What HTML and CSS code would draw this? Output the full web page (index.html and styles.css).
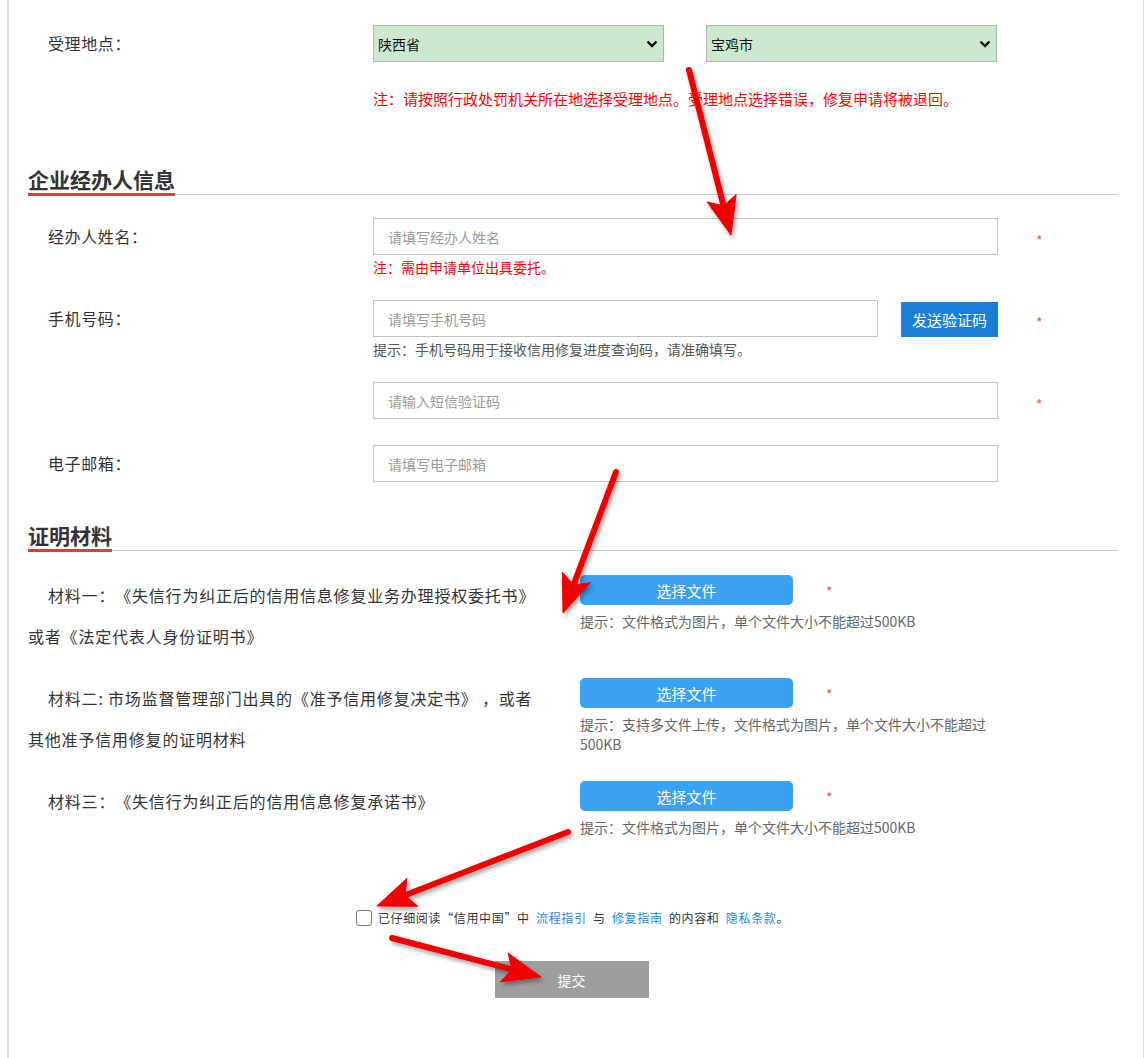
FILE: index.html
```html
<!DOCTYPE html>
<html lang="zh-CN">
<head>
<meta charset="utf-8">
<title>信用修复申请</title>
<link rel="stylesheet" href="styles.css">
</head>
<body>
<div class="page">
  <div class="row">
    <label class="lbl">受理地点：</label>
    <div class="field selects">
      <div class="sel-wrap">
        <select class="sel"><option>陕西省</option></select>
        <svg class="chev" width="12" height="8" viewBox="0 0 12 8"><path d="M1.5 1.5 L6 6 L10.5 1.5" fill="none" stroke="#111" stroke-width="2.4"/></svg>
      </div>
      <div class="sel-wrap">
        <select class="sel"><option>宝鸡市</option></select>
        <svg class="chev" width="12" height="8" viewBox="0 0 12 8"><path d="M1.5 1.5 L6 6 L10.5 1.5" fill="none" stroke="#111" stroke-width="2.4"/></svg>
      </div>
    </div>
  </div>
  <p class="note note-lg">注：请按照行政处罚机关所在地选择受理地点。受理地点选择错误，修复申请将被退回。</p>

  <h2 class="sec-title sec-first"><span>企业经办人信息</span></h2>

  <div class="row row-gap">
    <label class="lbl">经办人姓名：</label>
    <div class="field">
      <input class="inp" type="text" placeholder="请填写经办人姓名">
      <p class="note">注：需由申请单位出具委托。</p>
    </div>
    <span class="star">*</span>
  </div>

  <div class="row row-gap">
    <label class="lbl">手机号码：</label>
    <div class="field">
      <div class="inp-group">
        <input class="inp inp-phone" type="text" placeholder="请填写手机号码">
        <button class="btn-code" type="button">发送验证码</button>
      </div>
      <p class="hint">提示：手机号码用于接收信用修复进度查询码，请准确填写。</p>
    </div>
    <span class="star">*</span>
  </div>

  <div class="row row-gap-lg">
    <span class="lbl"></span>
    <div class="field">
      <input class="inp" type="text" placeholder="请输入短信验证码">
    </div>
    <span class="star">*</span>
  </div>

  <div class="row">
    <label class="lbl">电子邮箱：</label>
    <div class="field">
      <input class="inp" type="text" placeholder="请填写电子邮箱">
    </div>
  </div>

  <h2 class="sec-title sec-second"><span>证明材料</span></h2>

  <div class="mats">
    <div class="mat">
      <p class="mat-text">材料一：《失信行为纠正后的信用信息修复业务办理授权委托书》或者《法定代表人身份证明书》</p>
      <div class="mat-field">
        <div class="file-line"><button class="btn-file" type="button">选择文件</button><span class="star star-file">*</span></div>
        <p class="hint hint-file">提示：文件格式为图片，单个文件大小不能超过500KB</p>
      </div>
    </div>
    <div class="mat">
      <p class="mat-text">材料二: 市场监督管理部门出具的《准予信用修复决定书》 ，或者其他准予信用修复的证明材料</p>
      <div class="mat-field">
        <div class="file-line"><button class="btn-file" type="button">选择文件</button><span class="star star-file">*</span></div>
        <p class="hint hint-file">提示：支持多文件上传，文件格式为图片，单个文件大小不能超过500KB</p>
      </div>
    </div>
    <div class="mat">
      <p class="mat-text">材料三：《失信行为纠正后的信用信息修复承诺书》</p>
      <div class="mat-field">
        <div class="file-line"><button class="btn-file" type="button">选择文件</button><span class="star star-file">*</span></div>
        <p class="hint hint-file">提示：文件格式为图片，单个文件大小不能超过500KB</p>
      </div>
    </div>
  </div>

  <div class="agree">
    <input class="chk" type="checkbox">
    <span class="agree-text">已仔细阅读“信用中国”中 <a class="lnk">流程指引</a> 与 <a class="lnk">修复指南</a> 的内容和 <a class="lnk lnk-last">隐私条款</a>。</span>
  </div>

  <div class="submit-wrap"><button class="btn-submit" type="button">提交</button></div>
</div>

<svg class="arrows" width="1144" height="1058" viewBox="0 0 1144 1058">
  <defs>
    <filter id="sh" x="-20%" y="-20%" width="140%" height="140%">
      <feDropShadow dx="2" dy="3" stdDeviation="2" flood-color="#000" flood-opacity="0.35"/>
    </filter>
  </defs>
  <g fill="#f20000" stroke="#f20000" stroke-linejoin="round" filter="url(#sh)">
    <line x1="689" y1="70" x2="723.6" y2="205.9" stroke-width="6" stroke-linecap="round"/>
    <polygon points="731,235 707.1,201.9 723.6,205.9 736.1,194.5" stroke-width="1"/>
    <line x1="616" y1="472" x2="573.6" y2="584.9" stroke-width="6" stroke-linecap="round"/>
    <polygon points="563,613 562.4,572.1 573.6,584.9 590.4,582.7" stroke-width="1"/>
    <line x1="568" y1="832" x2="405" y2="895.2" stroke-width="6" stroke-linecap="round"/>
    <polygon points="377,906 407,878.3 405,895.2 417.8,906.3" stroke-width="1"/>
    <line x1="392" y1="938" x2="512" y2="969.4" stroke-width="6" stroke-linecap="round"/>
    <polygon points="541,977 500.4,981.9 512,969.4 508,952.9" stroke-width="1"/>
  </g>
</svg>
</body>
</html>
```

FILE: styles.css
```css
html, body {
  margin: 0;
  padding: 0;
  background: #fff;
}
body {
  position: relative;
  font-family: "Noto Sans CJK SC", "Microsoft YaHei", sans-serif;
  color: #333;
  width: 1144px;
  height: 1058px;
  overflow: hidden;
  text-spacing-trim: space-all;
}
.page {
  box-sizing: border-box;
  margin-left: 7px;
  width: 1137px;
  min-height: 1058px;
  border-left: 2px solid #e0e0e0;
  border-right: 1px solid #dcdcdc;
  padding: 25px 18px 0 19px;
}
p { margin: 0; }

.row {
  display: grid;
  grid-template-columns: 325px 625px auto;
  padding-left: 20px;
  align-items: start;
}
.row-gap { margin-bottom: 24px; }
.row-gap-lg { margin-bottom: 26px; }
.lbl {
  font-size: 16px;
  line-height: 37px;
  color: #333;
  letter-spacing: 0.6px;
}
.field { min-width: 0; }
.selects {
  display: flex;
  gap: 42px;
}
.sel-wrap {
  position: relative;
  width: 291px;
  height: 37px;
}
.sel {
  appearance: none;
  -webkit-appearance: none;
  box-sizing: border-box;
  width: 100%;
  height: 37px;
  margin: 0;
  background: #cce8cf;
  border: 1px solid #b4b4b4;
  border-radius: 0;
  padding: 0 0 0 4px;
  font-family: inherit;
  font-size: 14px;
  color: #111;
}
.chev {
  position: absolute;
  right: 6px;
  top: 15px;
  pointer-events: none;
}
.note {
  color: #ff0000;
  font-size: 14px;
  line-height: 18px;
  margin-top: 3px;
}
.note-lg {
  font-size: 15px;
  margin: 28px 0 0 345px;
}
.star {
  color: #f25555;
  font-size: 14px;
  line-height: 29px;
  padding: 8px 0 0 38px;
}

.sec-title {
  display: flex;
  align-items: flex-end;
  margin: 0;
  border-bottom: 1px solid #c8c8c8;
  font-size: 21px;
  font-weight: bold;
  color: #333;
  width: 1090px;
}
.sec-title span {
  display: block;
  line-height: 28px;
  border-bottom: 3px solid #e53a3a;
  margin-bottom: -2px;
}
.sec-first { margin-top: 57px; margin-bottom: 23px; }
.sec-second { margin-top: 39px; margin-bottom: 24px; }

.inp {
  box-sizing: border-box;
  display: block;
  width: 625px;
  height: 37px;
  margin: 0;
  border: 1px solid #c2c2c2;
  padding: 0 14px;
  font-family: inherit;
  font-size: 14px;
  color: #333;
  outline: none;
}
.inp::placeholder { color: #9a9a9a; }
.inp-group {
  display: flex;
  align-items: flex-end;
  gap: 23px;
}
.inp-phone { width: 505px; }
.btn-code {
  width: 97px;
  height: 35px;
  border: 0;
  margin: 0;
  padding: 0;
  background: #1a7fd9;
  color: #fff;
  font-family: inherit;
  font-size: 15px;
}
.hint {
  color: #555;
  font-size: 14px;
  line-height: 18px;
  margin-top: 3px;
}

.mats { display: flex; flex-direction: column; gap: 21px; }
.mat {
  display: grid;
  grid-template-columns: 512px 1fr;
  column-gap: 40px;
  align-items: start;
}
.mat-text {
  font-size: 16px;
  letter-spacing: 0.8px;
  line-height: 41px;
  text-indent: 20px;
  color: #333;
}
.file-line {
  display: flex;
  align-items: flex-start;
}
.btn-file {
  width: 213px;
  height: 30px;
  border: 0;
  border-radius: 5px;
  margin: 0;
  padding: 0;
  background: #3aa1f3;
  color: #fff;
  font-family: inherit;
  font-size: 15px;
}
.star-file {
  line-height: 24px;
  padding: 4px 0 0 33px;
}
.hint-file {
  width: 420px;
  color: #666;
  line-height: 20px;
  margin-top: 6px;
}

.agree {
  display: flex;
  justify-content: center;
  align-items: center;
  margin-top: 71px;
  height: 20px;
  padding-right: 8px;
}
.chk {
  appearance: none;
  -webkit-appearance: none;
  box-sizing: border-box;
  width: 16px;
  height: 16px;
  margin: 0 6px 0 0;
  border: 1px solid #7a7a7a;
  border-radius: 3px;
  background: #fff;
}
.agree-text {
  font-size: 12px;
  letter-spacing: 0.65px;
  color: #333;
  line-height: 20px;
}
.lnk {
  color: #1d86e0;
  margin: 0 3px;
}
.lnk-last { margin-right: 0; }

.submit-wrap {
  display: flex;
  justify-content: center;
  margin-top: 33px;
  padding-right: 10px;
}
.btn-submit {
  width: 154px;
  height: 37px;
  border: 0;
  margin: 0;
  background: #9e9e9e;
  color: #fff;
  font-family: inherit;
  font-size: 14px;
}

.arrows {
  position: absolute;
  left: 0;
  top: 0;
  pointer-events: none;
}
```
